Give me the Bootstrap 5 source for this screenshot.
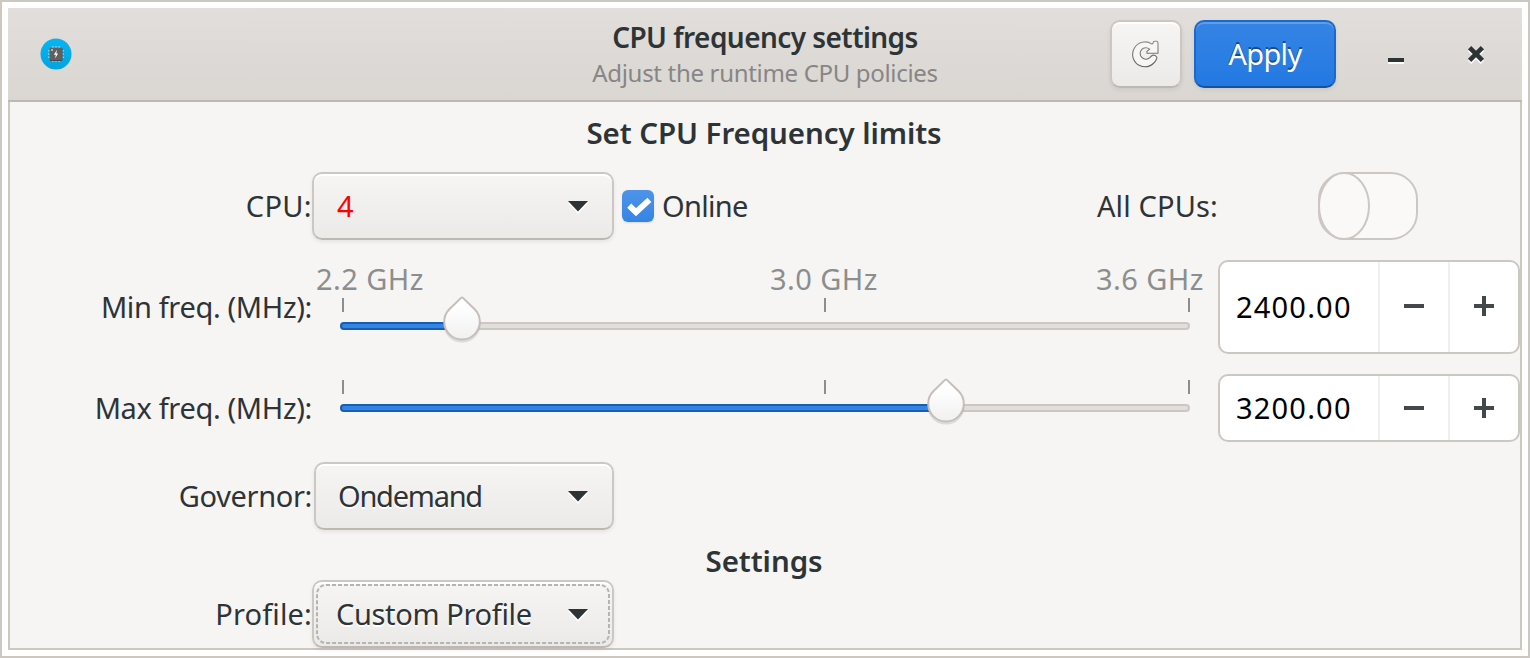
<!DOCTYPE html>
<html lang="en">
<head>
<meta charset="utf-8">
<meta name="viewport" content="width=device-width, initial-scale=1">
<title>CPU frequency settings</title>
<link href="https://cdn.jsdelivr.net/npm/bootstrap@5.3.0/dist/css/bootstrap.min.css" rel="stylesheet">
<style>
  body { background: #fff; color: #2e3436; font-family: "Noto Sans", "Open Sans", sans-serif; font-size: 29px; line-height: 40px; overflow: hidden; white-space: nowrap; }
  svg { display: block; flex: none; }
  .window-frame { height: 658px; border: 2px solid #cdc7c2; padding: 6px; }

  /* header bar */
  .title-strip { height: 94px; background: linear-gradient(#e1dedb, #dad6d2); border-bottom: 2px solid #bfb8b1; }
  .title-block { padding-top: 11px; }
  .title-text { font-size: 28px; font-weight: 600; line-height: 36px; letter-spacing: -.56px; }
  .subtitle-text { font-size: 24px; line-height: 36px; color: #868686; letter-spacing: -.32px; }
  .side-slot { width: 420px; }
  .app-icon { margin-left: 32px; }
  .actions { padding-left: 8px; }
  .action-btn { height: 68px; padding: 0; border-width: 2px; border-radius: 10px; font-size: 29px; line-height: 40px; display: flex; align-items: center; justify-content: center; }
  .refresh-btn { width: 72px; margin-right: 12px; }
  .raised { border: 2px solid #cdc7c2; border-bottom-color: #bfb8b1; background: linear-gradient(#f6f5f4, #ebeae8); box-shadow: inset 0 2px #fff, 0 2px 4px rgba(0,0,0,.07); color: #2e3436; text-shadow: 0 2px #fff; }
  .apply-btn { width: 142px; border: 2px solid #1b6acb; border-bottom-color: #15539e; background: linear-gradient(#3584e4, #2379e2); box-shadow: inset 0 2px #5d9de9, 0 2px 4px rgba(0,0,0,.07); color: #fff; text-shadow: 0 -2px #184a8b; letter-spacing: -.7px; }
  .win-min { margin-left: 50px; }
  .win-close { margin-left: 60px; }

  /* content pane */
  .pane { height: 548px; background: #f6f5f4; border: 2px solid #cdc7c2; border-top: 0; }
  .section-title { font-size: 29.5px; font-weight: 600; height: 70px; padding: 11px 2px 0 0; margin-bottom: 0; line-height: 40px; text-align: center; letter-spacing: -.08px; }
  .section-title.short-title { height: 50px; }
  .form-line { height: 68px; margin-bottom: 20px; display: flex; align-items: center; }
  .form-line.tall { height: 94px; }
  .form-line.flush { margin-bottom: 0; }
  .row-label { width: 302px; text-align: right; }
  .combo { width: 302px; height: 68px; padding: 0 24px 0 22px; border-radius: 10px; position: relative; display: flex; align-items: center; justify-content: space-between; font-size: 29px; line-height: 40px; }
  .combo-narrow { width: 300px; margin-left: 2px; }
  .combo-caret { margin-top: 3px; }
  .focus-outline { position: absolute; left: -2px; top: -2px; }
  .cpu-number { color: #f00; text-shadow: none; padding-left: 1px; }
  .check-box { width: 32px; height: 32px; border-radius: 6px; margin: 0 8px; background: linear-gradient(#4f94e9, #3584e4); box-shadow: 0 1px 2px rgba(0,0,0,.12); }
  .all-label { margin-left: auto; }
  .toggle-cell { width: 302px; padding-left: 100px; }

  /* sliders */
  .slider { width: 906px; height: 100%; }
  .mark-names { display: grid; grid-template-columns: 454px 326px auto; padding-left: 4px; margin-top: -1px; height: 39px; color: #8b8e8f; letter-spacing: .45px; }
  .ticks { display: flex; padding-left: 30px; height: 14px; margin-bottom: 10px; }
  .tick { width: 2px; height: 14px; background: #8b8e8f; }
  .tick-mid { margin-left: 480px; }
  .tick-end { margin-left: 362px; }
  .ticks-only { padding-top: 6px; }
  .trough { position: relative; height: 8px; margin: 0 28px; border: 2px solid #cdc7c2; border-radius: 4px; background: #e1dedb; }
  .fill { position: absolute; left: -2px; top: -2px; height: 8px; border: 2px solid #185fb4; border-radius: 4px 0 0 4px; background: #3584e4; }
  .knob { position: absolute; top: -28px; margin-left: -24px; }

  /* spin buttons */
  .spin { width: 302px; height: 100%; border: 2px solid #cdc7c2; border-radius: 10px; background: #fff; color: #000; display: flex; align-items: stretch; }
  .spin-value { flex: 1; padding-left: 16px; align-self: center; letter-spacing: 1.2px; }
  .spin-step { width: 70px; border: 0; border-left: 2px solid #f0efee; background: none; padding: 0; display: flex; align-items: center; justify-content: center; }
  .tall .spin-step { padding-bottom: 2px; }

  /* per-text tracking */
  .tr-up { letter-spacing: .35px; }
  .tr-up-s { letter-spacing: .15px; }
  .tr-dn { letter-spacing: -.35px; }
  .tr-dn-m { letter-spacing: -.7px; }
  .tr-dn-l { letter-spacing: -1.25px; }
</style>
</head>
<body>
<svg width="0" height="0" class="position-absolute">
  <defs>
    <linearGradient id="disc" x2="0" y2="1"><stop stop-color="#06b5f4"/><stop offset="1" stop-color="#03a4dc"/></linearGradient>
    <linearGradient id="drop" x2="0" y2="1"><stop offset=".2" stop-color="#fff"/><stop offset="1" stop-color="#f1f0ef"/></linearGradient>
    <linearGradient id="emboss" x2="0" y2="1"><stop stop-color="#8b8c8a"/><stop offset="1" stop-color="#5c5f5e"/></linearGradient>
    <symbol id="knob-shape" viewBox="0 0 48 50">
      <path d="M11.3 14.8A17.8 17.8 0 1 0 36.7 14.8Z" transform="translate(0 .8)" fill="#000" opacity=".1" stroke="#000" stroke-width="1.5"/>
      <path d="M24 1.5Q24.6 1.5 25.2 2.1L36.7 13.3A17.8 17.8 0 1 1 11.3 13.3L22.8 2.1Q23.4 1.5 24 1.5Z" fill="url(#drop)" stroke="#c6bfb8" stroke-width="2"/>
    </symbol>
    <symbol id="caret" viewBox="0 0 20 13"><path d="M0 2h20L10 13z" fill="#fff"/><path d="M0 0h20L10 10.5z" fill="#2e3436"/></symbol>
    <symbol id="minus" viewBox="0 0 20 20"><path d="M0 8h20v4H0z" fill="#43494b"/></symbol>
    <symbol id="plus" viewBox="0 0 20 20"><path d="M0 8h8V0h4v8h8v4h-8v8H8v-8H0z" fill="#43494b"/></symbol>
  </defs>
</svg>

<div class="window-frame">
  <header class="title-strip d-flex justify-content-between">
    <div class="side-slot d-flex align-items-center">
      <svg class="app-icon" width="32" height="32" viewBox="0 0 32 32">
        <circle cx="16" cy="16" r="15.5" fill="url(#disc)"/>
        <path d="M12.8 8v16M16 8v16M19.2 8v16M8 12.8h16M8 16h16M8 19.2h16" stroke="#7fd3f0" stroke-width="1.4"/>
        <rect x="9.8" y="10" width="12.6" height="13" rx="1.2" fill="#3f3f3f"/>
        <rect x="9.8" y="9.8" width="12.6" height="12.4" rx="1.2" fill="#606060"/>
        <circle cx="12" cy="12" r=".9" fill="#ddd"/>
        <path d="M17 11.8l-3.1 5h1.9l-.7 3.8 3-5h-1.8z" fill="#fff"/>
      </svg>
    </div>
    <div class="title-block d-flex flex-column align-items-center">
      <span class="title-text">CPU frequency settings</span>
      <span class="subtitle-text">Adjust the runtime CPU policies</span>
    </div>
    <div class="side-slot actions d-flex align-items-center">
      <button type="button" class="btn action-btn refresh-btn raised" aria-label="Refresh">
        <svg width="28" height="28" viewBox="0 0 28 28">
          <path d="M24.4 16.6Q25.3 17.5 24.6 18.8A12.4 12.4 0 1 1 20 4.1L21.2 3V2.6Q21.2 1.3 22.6 1.3H24.5Q26 1.3 26 2.8V13.2H15V11.2L17.6 9.2A5.7 5.7 0 1 0 18 17.4Q19.6 15.4 21.2 15.1Q23.2 14.9 24.4 16.6Z" fill="#f7f6f5" stroke="url(#emboss)" stroke-width="1.1"/>
        </svg>
      </button>
      <button type="button" class="btn action-btn apply-btn">Apply</button>
      <svg class="win-min" width="20" height="20" viewBox="0 0 20 20"><path d="M2 16h16v4H2z" fill="#fff" opacity=".9"/><path d="M2 14h16v4H2z" fill="#2e3436"/></svg>
      <svg class="win-close" width="20" height="20" viewBox="0 0 20 20"><path d="M3.6 5.6 16.4 18.4M16.4 5.6 3.6 18.4" stroke="#fff" opacity=".9" stroke-width="4.6"/><path d="M3.6 3.6 16.4 16.4M16.4 3.6 3.6 16.4" stroke="#2e3436" stroke-width="4.6"/></svg>
    </div>
  </header>

  <main class="pane">
    <h2 class="section-title">Set CPU Frequency limits</h2>

    <div class="form-line">
      <label class="row-label tr-up">CPU:</label>
      <button type="button" class="btn combo raised"><span class="cpu-number">4</span><svg class="combo-caret" width="20" height="13"><use href="#caret"/></svg></button>
      <span class="check-box"><svg width="32" height="32" viewBox="0 0 32 32"><path d="M7.2 15.6 14 22.2 27.4 9.8" fill="none" stroke="#fff" stroke-width="5.8"/></svg></span>
      <label class="tr-dn-m">Online</label>
      <label class="all-label tr-up-s">All CPUs:</label>
      <div class="toggle-cell">
        <svg width="100" height="68" viewBox="0 0 100 68">
          <rect x="1" y="1" width="98" height="66" rx="26" fill="#faf9f8" stroke="#cdc7c2" stroke-width="2"/>
          <ellipse cx="26" cy="34" rx="25" ry="33" fill="#faf9f8" stroke="#cdc7c2" stroke-width="2"/>
        </svg>
      </div>
    </div>

    <div class="form-line tall">
      <label class="row-label tr-dn">Min freq. (MHz):</label>
      <div class="slider">
        <div class="mark-names"><span>2.2 GHz</span><span>3.0 GHz</span><span>3.6 GHz</span></div>
        <div class="ticks"><i class="tick"></i><i class="tick tick-mid"></i><i class="tick tick-end"></i></div>
        <div class="trough"><div class="fill" style="width:14.2%"></div><svg class="knob" style="left:14.2%" width="48" height="50"><use href="#knob-shape"/></svg></div>
      </div>
      <div class="spin">
        <span class="spin-value">2400.00</span>
        <button type="button" class="spin-step" aria-label="Decrease"><svg width="20" height="20"><use href="#minus"/></svg></button>
        <button type="button" class="spin-step" aria-label="Increase"><svg width="20" height="20"><use href="#plus"/></svg></button>
      </div>
    </div>

    <div class="form-line">
      <label class="row-label tr-dn">Max freq. (MHz):</label>
      <div class="slider ticks-only">
        <div class="ticks"><i class="tick"></i><i class="tick tick-mid"></i><i class="tick tick-end"></i></div>
        <div class="trough"><div class="fill" style="width:71.4%"></div><svg class="knob" style="left:71.4%" width="48" height="50"><use href="#knob-shape"/></svg></div>
      </div>
      <div class="spin">
        <span class="spin-value">3200.00</span>
        <button type="button" class="spin-step" aria-label="Decrease"><svg width="20" height="20"><use href="#minus"/></svg></button>
        <button type="button" class="spin-step" aria-label="Increase"><svg width="20" height="20"><use href="#plus"/></svg></button>
      </div>
    </div>

    <div class="form-line flush">
      <label class="row-label tr-dn">Governor:</label>
      <button type="button" class="btn combo combo-narrow raised"><span class="tr-dn-l">Ondemand</span><svg class="combo-caret" width="20" height="13"><use href="#caret"/></svg></button>
    </div>

    <h2 class="section-title short-title">Settings</h2>

    <div class="form-line flush">
      <label class="row-label tr-up-s">Profile:</label>
      <button type="button" class="btn combo raised"><span class="tr-dn">Custom Profile</span><svg class="combo-caret" width="20" height="13"><use href="#caret"/></svg>
        <svg class="focus-outline" width="302" height="68" viewBox="0 0 302 68"><rect x="5" y="5" width="292" height="58" rx="9" fill="none" stroke="#b5b4b2" stroke-width="2" stroke-dasharray="4 2"/></svg>
      </button>
    </div>
  </main>
</div>
<script src="https://cdn.jsdelivr.net/npm/bootstrap@5.3.0/dist/js/bootstrap.bundle.min.js"></script>
</body>
</html>
